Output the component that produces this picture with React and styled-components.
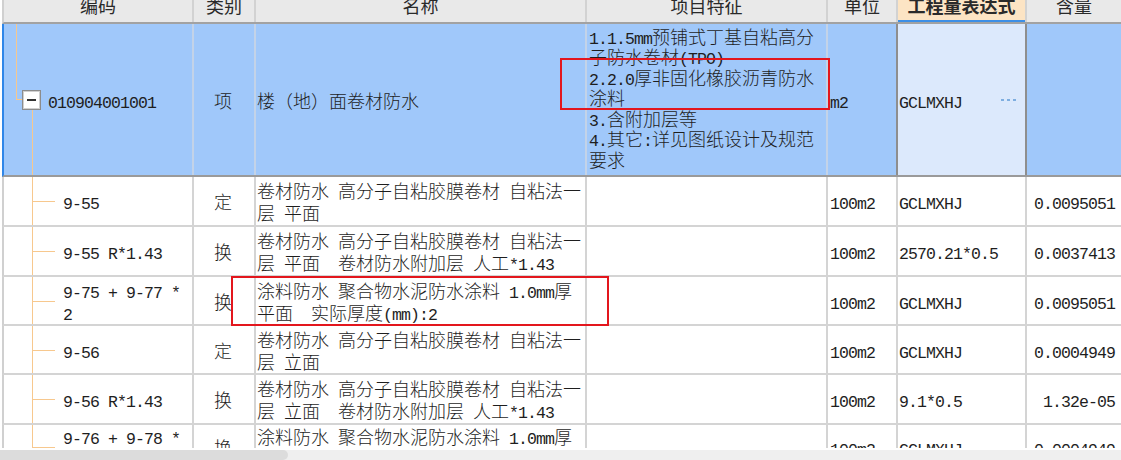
import React from 'react';
import styled, { createGlobalStyle } from 'styled-components';

const GlobalStyle = createGlobalStyle`
  html, body {
    margin: 0;
    padding: 0;
    background: #fff;
  }
  body {
    font-family: "Noto Sans CJK SC", sans-serif;
    font-weight: 300;
    color: #1e1e1e;
  }
`;

const ORANGE = '#f7c88e';
const COLS = '190px 62px 331px 241px 70px 129px 96px';

const Page = styled.div`
  position: relative;
  width: 1121px;
  height: 460px;
  overflow: hidden;
  background: #fff;
`;

const Grid = styled.div`
  height: 448px;
  overflow: hidden;
`;

const HeaderRow = styled.div`
  display: grid;
  grid-template-columns: ${COLS};
  height: 22px;
  margin-left: 2px;
  border-left: 2px solid #d0d0d0;
  border-bottom: 2px solid #a2a2a2;
  background: #e9e9e9;
`;

const HeaderCell = styled.div`
  display: flex;
  justify-content: center;
  align-items: flex-start;
  overflow: hidden;
  border-right: 2px solid #d2d2d2;
  font-size: 18px;
  line-height: 18px;
  color: #2a2a2a;
  background: ${(p) => (p.$active ? '#fce4c4' : 'transparent')};
  font-weight: ${(p) => (p.$active ? 'bold' : 'normal')};
  box-shadow: ${(p) => (p.$active ? 'inset 0 -2px 0 #3d8fe6' : 'none')};

  span {
    margin-top: -4px;
  }
`;

const Row = styled.div`
  display: grid;
  grid-template-columns: ${COLS};
  height: ${(p) => p.$h}px;
  margin-left: 2px;
  border-left: 2px solid ${(p) => (p.$selected ? '#2f86e8' : '#d0d0d0')};
  border-bottom: 2px solid ${(p) => (p.$selected ? '#9a9a9a' : '#d4d4d4')};
  background: ${(p) => (p.$selected ? '#a0c8fa' : '#fff')};
`;

const Cell = styled.div`
  display: flex;
  align-items: center;
  justify-content: ${(p) => p.$justify || 'flex-start'};
  min-width: 0;
  overflow: hidden;
  padding: ${(p) => p.$pad || '0'};
  border-right: 2px solid ${(p) => (p.$selected ? '#c3d3e8' : '#d4d4d4')};
  font-size: 18px;
`;

const FocusCell = styled(Cell)`
  justify-content: space-between;
  background: #dce9fc;
  border-right-color: #8e8e8e;
  box-shadow: -2px 0 0 #8e8e8e;
  padding: 0 8px 0 1px;
`;

const Lines = styled.div`
  white-space: pre;
  line-height: ${(p) => p.$lh || 22}px;
`;

const Ascii = styled.span`
  font-family: "Liberation Mono", monospace;
  font-weight: normal;
  font-size: 16.5px;
  line-height: 0;
  letter-spacing: -0.9px;
`;

const TreeSvg = styled.svg`
  flex: none;
  overflow: visible;
  align-self: stretch;
`;

const Scrollbar = styled.div`
  display: flex;
  height: 10px;
  margin-top: 2px;
  background: #efefef;
`;

const Thumb = styled.div`
  width: 288px;
  background: #dcdcdc;
  border-radius: 0 5px 5px 0;
`;

const Mark = styled.div`
  position: absolute;
  left: ${(p) => p.$x}px;
  top: ${(p) => p.$y}px;
  width: ${(p) => p.$w}px;
  height: ${(p) => p.$h}px;
  box-sizing: border-box;
  border: 2px solid #e3161d;
  pointer-events: none;
`;

// ascii runs get the narrow mono face, the rest stays CJK
const Mixed = ({ text }) =>
  text.split(/([\x20-\x7e]+)/).map((part, i) =>
    /^[\x20-\x7e]+$/.test(part) ? <Ascii key={i}>{part}</Ascii> : part
  );

const Text = ({ text, lh }) => (
  <Lines $lh={lh}>
    <Mixed text={text} />
  </Lines>
);

const RootTree = ({ h }) => {
  const mid = Math.round(h / 2);
  return (
    <TreeSvg width="44" height={h}>
      <line x1="12.5" y1="0" x2="12.5" y2={mid} stroke={ORANGE} />
      <line x1="12" y1={mid - 0.5} x2="18" y2={mid - 0.5} stroke={ORANGE} />
      <rect x="18.5" y={mid - 9.5} width="18" height="19" fill="#fff" stroke="#8c8c8c" />
      <rect x="19.5" y={mid - 8.5} width="16" height="17" fill="none" stroke="#d0d0d0" />
      <line x1="23" y1={mid} x2="32" y2={mid} stroke="#333" strokeWidth="2" />
      <line x1="28.5" y1={mid + 10} x2="28.5" y2={h + 2} stroke={ORANGE} />
    </TreeSvg>
  );
};

const ChildTree = ({ h }) => {
  const mid = Math.round(h / 2) + 0.5;
  return (
    <TreeSvg width="59" height={h}>
      <line x1="28.5" y1="0" x2="28.5" y2={h + 2} stroke={ORANGE} />
      <line x1="28" y1={mid} x2="51" y2={mid} stroke={ORANGE} />
    </TreeSvg>
  );
};

const Dots = () => (
  <svg width="16" height="4">
    <rect x="0" y="1" width="3" height="2" fill="#7eaee0" />
    <rect x="6" y="1" width="3" height="2" fill="#7eaee0" />
    <rect x="12" y="1" width="3" height="2" fill="#7eaee0" />
  </svg>
);

const headers = ['编码', '类别', '名称', '项目特征', '单位', '工程量表达式', '含量'];

const features =
  '1.1.5mm预铺式丁基自粘高分\n子防水卷材(TPO)\n2.2.0厚非固化橡胶沥青防水\n涂料\n3.含附加层等\n4.其它:详见图纸设计及规范\n要求';

const children = [
  { code: '9-55', type: '定', name: '卷材防水 高分子自粘胶膜卷材 自粘法一\n层 平面', expr: 'GCLMXHJ', qty: '0.0095051', h: 48 },
  { code: '9-55 R*1.43', type: '换', name: '卷材防水 高分子自粘胶膜卷材 自粘法一\n层 平面  卷材防水附加层 人工*1.43', expr: '2570.21*0.5', qty: '0.0037413', h: 48 },
  { code: '9-75 + 9-77 *\n2', type: '换', name: '涂料防水 聚合物水泥防水涂料 1.0mm厚\n平面  实际厚度(mm):2', expr: 'GCLMXHJ', qty: '0.0095051', h: 47 },
  { code: '9-56', type: '定', name: '卷材防水 高分子自粘胶膜卷材 自粘法一\n层 立面', expr: 'GCLMXHJ', qty: '0.0004949', h: 47 },
  { code: '9-56 R*1.43', type: '换', name: '卷材防水 高分子自粘胶膜卷材 自粘法一\n层 立面  卷材防水附加层 人工*1.43', expr: '9.1*0.5', qty: '1.32e-05', h: 48 },
  { code: '9-76 + 9-78 *\n2', type: '换', name: '涂料防水 聚合物水泥防水涂料 1.0mm厚\n立面  实际厚度(mm):2', expr: 'GCLMXHJ', qty: '0.0004949', h: 44 },
];

export default function App() {
  return (
    <Page>
      <GlobalStyle />
      <Grid>
        <HeaderRow>
          {headers.map((h) => (
            <HeaderCell key={h} $active={h === '工程量表达式'}>
              <span>{h}</span>
            </HeaderCell>
          ))}
        </HeaderRow>

        <Row $selected $h={151}>
          <Cell $selected>
            <RootTree h={151} />
            <Text text="010904001001" />
          </Cell>
          <Cell $selected $justify="center" $pad="0 2px 0 0">项</Cell>
          <Cell $selected $pad="0 0 0 1px">
            <Text text="楼（地）面卷材防水" />
          </Cell>
          <Cell $selected $pad="0 0 4px 2px">
            <Text text={features} lh={20.4} />
          </Cell>
          <Cell $selected $pad="0 0 0 2px">
            <Text text="m2" />
          </Cell>
          <FocusCell>
            <Text text="GCLMXHJ" />
            <Dots />
          </FocusCell>
          <Cell $selected />
        </Row>

        {children.map((r) => (
          <Row key={r.code} $h={r.h}>
            <Cell>
              <ChildTree h={r.h} />
              <Text text={r.code} />
            </Cell>
            <Cell $justify="center" $pad="0 2px 0 0">{r.type}</Cell>
            <Cell $pad="0 0 0 1px">
              <Text text={r.name} />
            </Cell>
            <Cell />
            <Cell $pad="0 0 0 2px">
              <Text text="100m2" />
            </Cell>
            <Cell $pad="0 0 0 1px">
              <Text text={r.expr} />
            </Cell>
            <Cell $justify="flex-end" $pad="0 6px 0 0">
              <Text text={r.qty} />
            </Cell>
          </Row>
        ))}
      </Grid>

      <Scrollbar>
        <Thumb />
      </Scrollbar>

      <Mark $x={560} $y={58} $w={270} $h={52} />
      <Mark $x={231} $y={276} $w={378} $h={50} />
    </Page>
  );
}
